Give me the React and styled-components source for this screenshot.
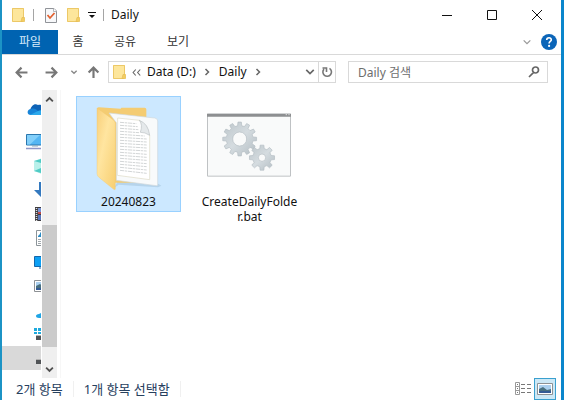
import React from "react";
import styled, { createGlobalStyle } from "styled-components";

const GlobalStyle = createGlobalStyle`
  * { box-sizing: border-box; }
  body {
    margin: 0;
    background: #fff;
    color: #111;
    font-family: "Noto Sans", "Noto Sans CJK KR", sans-serif;
    font-size: 12px;
    line-height: 16px;
  }
  button, input { font: inherit; color: inherit; }
  svg { flex: none; }
`;

const Window = styled.main`
  display: flex;
  flex-direction: column;
  height: 100vh;
  border-left: 2px solid #1c93c5;
  border-right: 3px solid #0a86cc;
  overflow: hidden;
`;

const PlainButton = styled.button`
  display: flex;
  align-items: center;
  justify-content: center;
  flex: none;
  padding: 0;
  border: 0;
  background: none;
`;

const TitleBar = styled.header`
  display: flex;
  align-items: center;
  flex: none;
  height: 30px;
  padding: 0 2px 0 8px;
`;

const QuickButton = styled(PlainButton)`
  width: ${(p) => p.$width}px;
  height: 24px;
`;

const Separator = styled.span`
  width: 1px;
  height: 12px;
  margin: 0 ${(p) => p.$after}px 0 ${(p) => p.$before}px;
  background: #a5a5a5;
`;

const Title = styled.h1`
  flex: 1;
  margin: 0;
  font-size: 12px;
  font-weight: 400;
`;

const CaptionButton = styled(PlainButton)`
  width: 45px;
  height: 28px;
`;

const Ribbon = styled.nav`
  display: flex;
  align-items: center;
  flex: none;
  height: 25px;
  padding-right: 1px;
  border-bottom: 1px solid #d9d9d9;
`;

const Tab = styled(PlainButton)`
  width: ${(p) => p.$width}px;
  height: 24px;
  padding-bottom: 1px;
  background: ${(p) => (p.$active ? "#0063b1" : "none")};
  color: ${(p) => (p.$active ? "#d8ecfb" : "#333")};
`;

const Spacer = styled.span`
  flex: 1;
`;

const RibbonButton = styled(PlainButton)`
  width: 22px;
  height: 22px;
`;

const NavBar = styled.div`
  display: flex;
  align-items: center;
  flex: none;
  height: 34px;
  padding: 0 13px 0 7px;
`;

const NavButton = styled(PlainButton)`
  width: ${(p) => p.$width}px;
  height: 24px;
`;

const AddressBar = styled.div`
  display: flex;
  align-items: center;
  flex: 1;
  height: 22px;
  padding-left: 2px;
  border: 1px solid #d9d9d9;
`;

const Crumb = styled(PlainButton)`
  margin: 0 8px 0 ${(p) => (p.$first ? 2 : 9)}px;
`;

const AddressButton = styled(PlainButton)`
  width: ${(p) => p.$width}px;
  height: 20px;
  border-left: ${(p) => (p.$divided ? "1px solid #d9d9d9" : "0")};
`;

const SearchBox = styled.label`
  display: flex;
  align-items: center;
  flex: 0 1 200px;
  min-width: 0;
  height: 22px;
  margin-left: 12px;
  padding: 0 7px 0 9px;
  border: 1px solid #d9d9d9;
`;

const SearchInput = styled.input`
  flex: 1;
  min-width: 0;
  height: 18px;
  padding: 0;
  border: 0;
  outline: 0;
  background: none;
  &::placeholder { color: #6d6d6d; opacity: 1; }
`;

const Body = styled.div`
  display: flex;
  flex: 1;
  min-height: 0;
  padding-top: 1px;
`;

const Sidebar = styled.aside`
  display: flex;
  flex: none;
  width: 59px;
  border-right: 1px solid #f7f7f7;
`;

const Tree = styled.ul`
  flex: 1;
  min-width: 0;
  margin: 0;
  padding: 8px 0 0;
  overflow: hidden;
  list-style: none;
`;

const TreeRow = styled.li`
  margin-bottom: ${(p) => (p.$last ? 8 : 0)}px;
`;

const TreeButton = styled(PlainButton)`
  justify-content: flex-start;
  width: 100%;
  height: 24px;
  padding-left: ${(p) => (p.$root ? 24 : 32)}px;
  background: ${(p) => (p.$selected ? "#d9d9d9" : "none")};
  overflow: hidden;
`;

const Scrollbar = styled.div`
  display: flex;
  flex-direction: column;
  flex: none;
  width: 15px;
  margin: 0 3px 0 1px;
  background: #efefef;
`;

const ScrollArrow = styled(PlainButton)`
  height: 18px;
`;

const ScrollTrack = styled.div`
  flex: 117;
`;

const ScrollThumb = styled.div`
  flex: 122;
  background: #cbcbcb;
`;

const ScrollRest = styled.div`
  flex: 13;
`;

const Files = styled.section`
  display: flex;
  flex: 1;
  flex-wrap: wrap;
  align-content: flex-start;
  align-items: flex-start;
  gap: 16px;
  padding: 6px 15px;
`;

const FileTile = styled.button`
  display: flex;
  flex-direction: column;
  align-items: center;
  width: 105px;
  padding: 7px 3px 2px;
  border: 1px solid ${(p) => (p.$selected ? "#99d1ff" : "transparent")};
  background: ${(p) => (p.$selected ? "#cce8ff" : "none")};
`;

const FileName = styled.span`
  max-width: 97px;
  padding-top: 2px;
  line-height: 15px;
  text-align: center;
  word-break: break-all;
`;

const StatusBar = styled.footer`
  display: flex;
  align-items: center;
  flex: none;
  height: 22px;
  padding: 0 5px 0 14px;
  color: #27405e;
  font-size: 13px;
`;

const StatusText = styled.span`
  padding-right: 10px;
  margin-right: 10px;
  border-right: 1px solid #f0f0f0;
`;

const ViewButton = styled(PlainButton)`
  width: 22px;
  height: 22px;
  border: 1px solid ${(p) => (p.$active ? "#3aa0cf" : "transparent")};
  background: ${(p) => (p.$active ? "#cce8f6" : "none")};
`;

function FolderIcon() {
  return (
    <svg width="14" height="18" viewBox="0 0 14 18" aria-hidden="true">
      <path d="M1 2h12v9.500h.5v4H1z" fill="#fbdf83" />
      <path d="M1.500 2.500h11v9l-1 .5v3.500h-10z" fill="#fde69b" stroke="#ecc867" />
      <path d="M11 11.500h2.500v4H10z" fill="#f3cd62" stroke="#e2b94f" strokeWidth=".6" />
    </svg>
  );
}

function CheckPageIcon() {
  return (
    <svg width="14" height="18" viewBox="0 0 14 18" aria-hidden="true">
      <path d="M1.500 2.500h8.500l2.500 2.500v11.500h-11z" fill="#f7f8fa" stroke="#909398" />
      <path d="M9.500 2.500v3h3" fill="#fff" stroke="#a2a5a8" strokeWidth=".8" />
      <path d="M3.500 9l2.500 3 4.500-5" fill="none" stroke="#e2612f" strokeWidth="1.800" />
    </svg>
  );
}

function Stroke({ size = 12, d, color = "#777", weight = 2 }) {
  return (
    <svg width={size} height={size} viewBox="0 0 12 12" aria-hidden="true">
      <path d={d} fill="none" stroke={color} strokeWidth={weight} />
    </svg>
  );
}

function CrumbArrow() {
  return (
    <svg width="6" height="10" viewBox="0 0 6 10" aria-hidden="true">
      <path d="M1.500 2l3 3-3 3" fill="none" stroke="#666" strokeWidth="1.500" />
    </svg>
  );
}

function CloudIcon() {
  return (
    <svg width="20" height="14" viewBox="0 0 20 14" aria-hidden="true">
      <path d="M4 8C5 2 9 0 12 2c3-1 6 1 6 4 3 0 2 2 2 4z" fill="#0f63b6" />
      <path d="M5 12c-5 0-4-6 0-6 3-1 5 0 7 2l4 4z" fill="#1784d8" />
      <path d="M4 12l8-4c3-2 8 0 8 4z" fill="#2ca9ec" />
    </svg>
  );
}

function ComputerIcon() {
  return (
    <svg width="18" height="16" viewBox="0 0 18 16" aria-hidden="true">
      <path d="M.5.500h17v10.500H.5z" fill="#55b6f3" stroke="#2b77ae" />
      <path d="M1 1h13L4 10.500H1z" fill="#82cffa" />
      <path d="M6 12h6" stroke="#8ba6b8" />
      <path d="M0 14.500h18" stroke="#8f97c7" strokeWidth="1.500" />
    </svg>
  );
}

function ObjectsIcon() {
  return (
    <svg width="16" height="16" viewBox="0 0 16 16" aria-hidden="true">
      <path d="M0 3l8-3 8 3v10l-8 3-8-3z" fill="#b9f0ea" />
      <path d="M0 3l7-2v4zM0 13l7-3v5z" fill="#50cbc5" />
    </svg>
  );
}

function DownloadIcon() {
  return (
    <svg width="16" height="16" viewBox="0 0 16 16" aria-hidden="true">
      <path d="M5 0h6v8h5l-8 8-8-8h5z" fill="#3479bf" />
    </svg>
  );
}

function FilmIcon() {
  return (
    <svg width="16" height="16" viewBox="0 0 16 16" aria-hidden="true">
      <path d="M1 1h15v14H1z" fill="#3e3c40" />
      <path d="M2.500 2v13" stroke="#dedede" strokeWidth="1.500" strokeDasharray="1 1" />
      <path d="M4 2h9v4H4z" fill="#7792d3" />
      <path d="M4 6h9v2H4z" fill="#bf4a4a" />
      <path d="M4 9h9v5H4z" fill="#5977bd" />
    </svg>
  );
}

function DocumentIcon() {
  return (
    <svg width="16" height="16" viewBox="0 0 16 16" aria-hidden="true">
      <path d="M2.500.500h12v15h-12z" fill="#fff" stroke="#8c9499" />
      <path d="M4 6l2-2V2.500h2V7H4z" fill="#2a8bc4" />
      <path d="M4 9.500h8M4 11.500h8M4 13.500h8" stroke="#a0a8ad" />
    </svg>
  );
}

function DesktopIcon() {
  return (
    <svg width="16" height="14" viewBox="0 0 16 14" aria-hidden="true">
      <path d="M.5 1.500h15v10H.5z" fill="#0da0f4" stroke="#1467ab" />
      <path d="M5 13h6" stroke="#1467ab" />
    </svg>
  );
}

function PictureIcon() {
  return (
    <svg width="16" height="12" viewBox="0 0 16 12" aria-hidden="true">
      <path d="M.5.500h15v11H.5z" fill="#fff" stroke="#8d9194" />
      <path d="M2 2h12v8H2z" fill="#abd0ef" />
      <path d="M2 6l4-2 4 3 4-1v4H2z" fill="#49707f" />
      <path d="M2 8h12v2H2z" fill="#345b95" />
    </svg>
  );
}

function CloudPieceIcon() {
  return (
    <svg width="16" height="16" viewBox="0 0 16 16" aria-hidden="true">
      <path d="M5 16c-4 0-4-4 0-4l2-1h8v5z" fill="#20a5e5" />
    </svg>
  );
}

function DriveIcon({ system }) {
  return (
    <svg width="16" height="16" viewBox="0 0 16 16" aria-hidden="true">
      {system && <path d="M0 2h3v3H0zM4 2h3v3H4zM0 6h3v2H0zM4 6h3v2H4z" fill="#1eaadd" />}
      <path d="M2 9h14v1H2z" fill="#b3b3b3" />
      <path d="M2 10h14v4H2z" fill="#505356" />
    </svg>
  );
}

function LargeFolder() {
  return (
    <svg width="72" height="88" viewBox="68 42 216 264" aria-hidden="true">
      <defs>
        <linearGradient id="cover" x1="0" y1="0" x2="1" y2="1">
          <stop stopColor="#f8cf79" />
          <stop offset=".4" stopColor="#ffe5a0" />
          <stop offset="1" stopColor="#f7ce70" />
        </linearGradient>
      </defs>
      <path d="M131 294l12-22 122 10 8 5-10 5-118-8z" fill="#a6c6de" opacity=".6" />
      <path d="M80 56q1-4 6-4l65 4 2-3h70q5 0 5 5v220H110z" fill="#f4cc72" />
      <path d="M116 69l137 15q9 1 9 9v191q0 3-4 3l-120-16V98z" fill="#f8fafb" stroke="#cfd8dc" strokeWidth="2" />
      <path d="M142 84l66 7 30 46v132l-97-13z" fill="#fff" stroke="#ddd9c4" strokeWidth="2" />
      <path
        d="M149 97l49 4M149 106l53 4M149 115l55 4M149 124l57 4M149 133l74 5M149 142l80 5M149 151l80 5M149 160l80 5M149 169l80 5M149 178l80 5M149 187l80 6M149 196l80 6M149 205l80 6M149 214l80 7M149 223l80 7M149 232l80 8M149 241l80 9"
        stroke="#c9cdce"
        strokeWidth="2.500"
        strokeDasharray="13 2 7 2"
      />
      <path d="M207 91q11 13 3 36 13-1 28 9-4-35-31-45z" fill="#e5e9eb" stroke="#bac0c2" strokeWidth="2" />
      <path d="M80 54l48 35q7 5 7 12v196q0 4-5 1l-43-35q-7-5-7-12z" fill="url(#cover)" stroke="#efc66f" />
    </svg>
  );
}

function gearPath(cx, cy, outer, root, hole, teeth) {
  const step = (Math.PI * 2) / teeth;
  const points = [];
  for (let i = 0; i < teeth; i += 1) {
    [[-0.3, root], [-0.19, outer], [0.19, outer], [0.3, root]].forEach(([t, r]) => {
      const a = (i + t) * step - Math.PI / 2;
      points.push(`${cx + r * Math.cos(a)} ${cy + r * Math.sin(a)}`);
    });
  }
  return `M${points.join("L")}Z M${cx - hole} ${cy}a${hole} ${hole} 0 1 0 ${hole * 2} 0a${hole} ${hole} 0 1 0 ${-hole * 2} 0Z`;
}

function BatchIcon() {
  return (
    <svg width="85" height="88" viewBox="51 12 255 264" aria-hidden="true">
      <defs>
        <linearGradient id="metal" x1="0" y1="0" x2="1" y2="1">
          <stop stopColor="#bcc5ca" />
          <stop offset=".5" stopColor="#d5dce0" />
          <stop offset="1" stopColor="#b3bdc3" />
        </linearGradient>
      </defs>
      <path d="M52.500 42.500h249v186h-249z" fill="#f9fafa" stroke="#bfc2c4" strokeWidth="3" />
      <path d="M51 41h252v9H51z" fill="#8d8f91" />
      <path d="M287 44h4M295 44h4" stroke="#ddd" strokeWidth="3" />
      <g fill="url(#metal)" fillRule="evenodd" stroke="#b3bdc3" strokeWidth="2" strokeLinejoin="round">
        <path d={gearPath(149, 117, 51, 40, 21, 12)} />
        <path d={gearPath(216, 173, 38, 28, 11, 8)} />
      </g>
    </svg>
  );
}

const treeItems = [
  { name: "OneDrive", icon: <CloudIcon />, root: true, last: true },
  { name: "내 PC", icon: <ComputerIcon />, root: true },
  { name: "3D 개체", icon: <ObjectsIcon /> },
  { name: "다운로드", icon: <DownloadIcon /> },
  { name: "동영상", icon: <FilmIcon /> },
  { name: "문서", icon: <DocumentIcon /> },
  { name: "바탕 화면", icon: <DesktopIcon /> },
  { name: "사진", icon: <PictureIcon /> },
  { name: "클라우드", icon: <CloudPieceIcon /> },
  { name: "로컬 디스크 (C:)", icon: <DriveIcon system /> },
  { name: "Data (D:)", icon: <DriveIcon />, selected: true },
];

export default function App() {
  return (
    <>
      <GlobalStyle />
      <Window>
        <TitleBar>
          <QuickButton $width={16} aria-label="폴더"><FolderIcon /></QuickButton>
          <Separator $before={7} $after={9} />
          <QuickButton $width={16} aria-label="속성"><CheckPageIcon /></QuickButton>
          <QuickButton $width={28} aria-label="새 폴더"><FolderIcon /></QuickButton>
          <QuickButton $width={10} aria-label="사용자 지정">
            <svg width="8" height="8" viewBox="0 0 8 8" aria-hidden="true">
              <path d="M0 1h8v1H0zM1 4h6L4 7z" fill="#111" />
            </svg>
          </QuickButton>
          <Separator $before={6} $after={7} />
          <Title>Daily</Title>
          <CaptionButton aria-label="최소화">
            <Stroke d="M1 6.500h10" color="#111" weight={1} />
          </CaptionButton>
          <CaptionButton aria-label="최대화">
            <Stroke d="M1.500 1.500h9v9h-9z" color="#111" weight={1} />
          </CaptionButton>
          <CaptionButton aria-label="닫기">
            <Stroke d="M1 1l10 10M11 1L1 11" color="#111" weight={1} />
          </CaptionButton>
        </TitleBar>

        <Ribbon>
          <Tab $width={56} $active>파일</Tab>
          <Tab $width={40}>홈</Tab>
          <Tab $width={54}>공유</Tab>
          <Tab $width={52}>보기</Tab>
          <Spacer />
          <RibbonButton aria-label="리본 확장">
            <Stroke size={10} d="M2 4l4 4 4-4" color="#999" weight={1.5} />
          </RibbonButton>
          <RibbonButton aria-label="도움말">
            <svg width="16" height="16" viewBox="0 0 16 16" aria-hidden="true">
              <circle cx="8" cy="8" r="8" fill="#0b65b8" />
              <path d="M5.700 6.100c0-3.100 4.800-3 4.600-.2-.1 1.600-2.200 1.600-2.200 3.600" fill="none" stroke="#fff" strokeWidth="1.600" />
              <circle cx="8.100" cy="11.900" r="1.100" fill="#fff" />
            </svg>
          </RibbonButton>
        </Ribbon>

        <NavBar>
          <NavButton $width={24} aria-label="뒤로">
            <Stroke size={13} d="M11.500 6H1.500M6 1.500L1.500 6 6 10.500" />
          </NavButton>
          <NavButton $width={36} aria-label="앞으로">
            <Stroke size={13} d="M.5 6h10M6 1.500L10.500 6 6 10.500" />
          </NavButton>
          <NavButton $width={10} aria-label="최근 위치">
            <Stroke size={8} d="M2 4l4 4 4-4" color="#888" />
          </NavButton>
          <NavButton $width={29} aria-label="위로">
            <Stroke size={13} d="M6 11V1.500M1.500 6L6 1.500 10.500 6" />
          </NavButton>
          <AddressBar>
            <QuickButton $width={16} aria-hidden="true" tabIndex={-1}><FolderIcon /></QuickButton>
            <AddressButton $width={18} aria-label="이전 경로">
              <Stroke size={9} d="M5 2L1.500 6 5 10M11 2L7.500 6l3.500 4" color="#666" weight={1.5} />
            </AddressButton>
            <Crumb $first>Data (D:)</Crumb>
            <CrumbArrow />
            <Crumb>Daily</Crumb>
            <CrumbArrow />
            <Spacer />
            <AddressButton $width={17} aria-label="주소 목록">
              <Stroke size={10} d="M1.500 3.500L6 8l4.500-4.500" color="#666" />
            </AddressButton>
            <AddressButton $width={17} $divided aria-label="새로 고침">
              <Stroke d="M8.500 2.400A4.300 4.300 0 1 1 3 3.100M1.500 2H5.500V6" color="#777" weight={1.6} />
            </AddressButton>
          </AddressBar>
          <SearchBox>
            <SearchInput type="text" placeholder="Daily 검색" aria-label="Daily 검색" />
            <Stroke d="M7.500 1a3 3 0 1 1 0 6a3 3 0 1 1 0-6M5.400 6.600L1 11" color="#666" weight={1.7} />
          </SearchBox>
        </NavBar>

        <Body>
          <Sidebar>
            <Tree>
              {treeItems.map((item) => (
                <TreeRow key={item.name} $last={item.last}>
                  <TreeButton $root={item.root} $selected={item.selected} aria-label={item.name}>
                    {item.icon}
                  </TreeButton>
                </TreeRow>
              ))}
            </Tree>
            <Scrollbar>
              <ScrollArrow aria-label="위로 스크롤">
                <Stroke size={9} d="M1.500 8.500L6 4l4.500 4.500" color="#505050" weight={2.4} />
              </ScrollArrow>
              <ScrollTrack />
              <ScrollThumb />
              <ScrollRest />
              <ScrollArrow aria-label="아래로 스크롤">
                <Stroke size={9} d="M1.500 3.500L6 8l4.500-4.500" color="#505050" weight={2.4} />
              </ScrollArrow>
            </Scrollbar>
          </Sidebar>
          <Files>
            <FileTile $selected>
              <LargeFolder />
              <FileName>20240823</FileName>
            </FileTile>
            <FileTile>
              <BatchIcon />
              <FileName>CreateDailyFolder.bat</FileName>
            </FileTile>
          </Files>
        </Body>

        <StatusBar>
          <StatusText>2개 항목</StatusText>
          <StatusText>1개 항목 선택함</StatusText>
          <Spacer />
          <ViewButton aria-label="자세히">
            <svg width="16" height="14" viewBox="0 0 16 14" aria-hidden="true">
              <path d="M.5.500h4v12h-4zM.5 4.500h4M.5 8.500h4" fill="none" stroke="#999" />
              <path d="M2 2.500h1M2 6.500h1M2 10.500h1M6 2.500h4M12 2.500h4M6 6.500h4M12 6.500h4M6 10.500h4M12 10.500h4" stroke="#777" />
            </svg>
          </ViewButton>
          <ViewButton $active aria-label="큰 아이콘"><PictureIcon /></ViewButton>
        </StatusBar>
      </Window>
    </>
  );
}
